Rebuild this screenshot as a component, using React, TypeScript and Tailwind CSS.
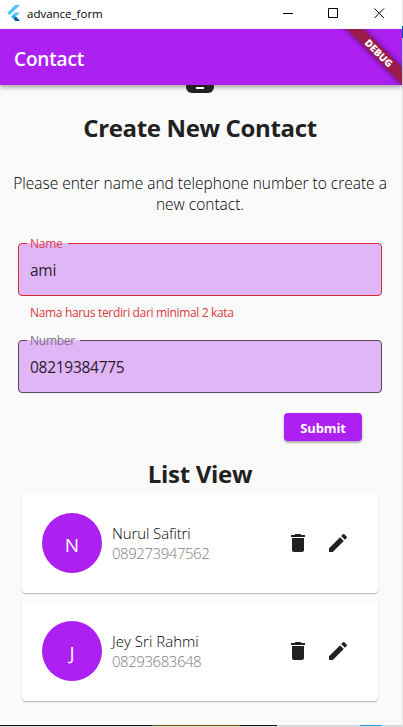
import React from "react";

type FieldProps = {
  label: string;
  value: string;
  invalid?: boolean;
  labelClass: string;
};

function Field({ label, value, invalid, labelClass }: FieldProps) {
  return (
    <div
      className={
        "relative mx-[18px] flex h-[53px] items-center rounded-[4px] border bg-[#e1b6f7] pl-[11px] font-normal " +
        (invalid ? "border-[#d62b35]" : "border-[#5b4a66]")
      }
    >
      <span
        className={
          "absolute -top-px left-2 flex h-px items-center whitespace-nowrap bg-[#e6c3f8] pl-[3px] text-[12px] leading-none tracking-[-0.25px] " +
          labelClass
        }
      >
        {label}
      </span>
      <span className="whitespace-nowrap text-[15.5px] leading-5 tracking-[-0.28px] text-[#2a2030]">{value}</span>
    </div>
  );
}

type ContactProps = { initial: string; name: string; phone: string; nameClass: string };

function ContactCard({ initial, name, phone, nameClass }: ContactProps) {
  return (
    <div className="mx-[22px] flex h-[100px] items-center rounded-[4px] bg-white pl-5 pr-7 shadow-[0_1px_1px_rgba(0,0,0,0.22),0_1px_2px_rgba(0,0,0,0.08)]">
      <div className="flex h-[60px] w-[60px] items-center justify-center rounded-full bg-[#ad20f2] pt-[4px] text-[19px] font-normal text-white">
        {initial}
      </div>
      <div className="ml-2.5 flex flex-1 flex-col whitespace-nowrap text-[15px] leading-5">
        <span className={"text-black " + nameClass}>{name}</span>
        <span className="tracking-[-0.45px] text-[#808080]">{phone}</span>
      </div>
      <div className="flex gap-4 text-[#212121]">
        <svg className="h-6 w-6" viewBox="0 0 24 24" fill="currentColor">
          <path d="M6 19c0 1.1.9 2 2 2h8c1.1 0 2-.9 2-2V7H6v12zM19 4h-3.5l-1-1h-5l-1 1H5v2h14V4z" />
        </svg>
        <svg className="h-6 w-6" viewBox="0 0 24 24" fill="currentColor">
          <path d="M3 17.25V21h3.75L17.81 9.94l-3.75-3.75L3 17.25zM20.71 7.04a1 1 0 0 0 0-1.41l-2.34-2.34a1 1 0 0 0-1.41 0l-1.83 1.83 3.75 3.75 1.83-1.83z" />
        </svg>
      </div>
    </div>
  );
}

function TitleBar() {
  return (
    <header className="flex h-[29px] items-center bg-white pl-[7px]">
      <svg className="mt-[-3px] h-4 w-[14px]" viewBox="0 0 14 16">
        <path d="M8.2 0H13L2.6 10.2.2 7.8z" fill="#54c5f8" />
        <path d="M8.2 7.4H13L8.8 11.6 6.5 9.3z" fill="#54c5f8" />
        <path d="M4.2 11.6 6.6 9.2l2.4 2.4-2.4 2.4z" fill="#29a6e5" />
        <path d="M6.6 14 9 11.6 13 16H8.4z" fill="#01579b" />
      </svg>
      <span className="ml-[6px] mt-[-2px] whitespace-nowrap text-[11.5px] font-normal leading-4 text-black">advance_form</span>
      <svg className="ml-auto mr-[16px] mt-[-2px] h-[11px] w-[104px]" viewBox="0 0 104 11" fill="none" stroke="#000" strokeWidth="1">
        <path d="M1 5.5h10" />
        <path d="M46.5 .5h9v9h-9z" />
        <path d="M92.5 .5l9.5 9.5M102 .5l-9.5 9.5" />
      </svg>
    </header>
  );
}

function AppBar() {
  return (
    <div className="relative z-10 flex h-14 items-center bg-[#ad20f2] pl-[14px] shadow-[0_2px_4px_rgba(0,0,0,0.28),0_4px_5px_rgba(0,0,0,0.08)]">
      <h1 className="mt-1 whitespace-nowrap text-[19px] font-semibold leading-6 tracking-[-0.15px] text-white">Contact</h1>
      <div className="absolute inset-y-0 right-0 w-20 overflow-hidden">
        <div className="absolute right-[-27px] top-[18px] flex h-3 w-[100px] rotate-45 items-center justify-center bg-[#991b4c] text-[10px] font-extrabold leading-none text-white shadow-[0_0_6px_rgba(0,0,0,0.5)]">
          DEBUG
        </div>
      </div>
      <div className="absolute left-[186px] top-14 flex h-2 w-7 justify-center rounded-b-[6px] bg-[#212121] pt-[2px]">
        <div className="h-0.5 w-2 bg-white" />
      </div>
    </div>
  );
}

export default function App() {
  return (
    <div className="flex h-[727px] w-[403px] flex-col overflow-hidden bg-[#fafafa] font-['Open_Sans','Noto_Sans',sans-serif] font-light">
      <div className="flex min-h-0 flex-1">
        <div className="flex w-[402px] shrink-0 flex-col">
          <TitleBar />
          <AppBar />
          <main className="flex w-[400px] flex-col">
            <h2 className="mt-[27px] whitespace-nowrap text-center text-[24px] font-bold leading-8 tracking-[-0.35px] text-[#212121]">
              Create New Contact
            </h2>
            <p className="mt-[29px] flex flex-col whitespace-nowrap text-center text-[15.5px] leading-[21px] text-black">
              <span>Please enter name and telephone number to create a</span>
              <span>new contact.</span>
            </p>
            <div className="mt-[28px]">
              <Field label="Name" value="ami" invalid labelClass="w-[41px] text-[#d8414b]" />
            </div>
            <p className="ml-[30px] mt-[9px] whitespace-nowrap text-[12px] font-normal leading-4 tracking-[-0.34px] text-[#d63a3a]">
              Nama harus terdiri dari minimal 2 kata
            </p>
            <div className="mt-[19px]">
              <Field label="Number" value="08219384775" labelClass="w-[53px] text-[#7d7084]" />
            </div>
            <button className="ml-[284px] mt-5 flex h-7 w-[78px] items-center justify-center rounded-[4px] bg-[#ad20f2] pt-[3px] text-[13px] font-bold tracking-[-0.1px] text-white shadow-[0_2px_2px_rgba(0,0,0,0.22),0_1px_3px_rgba(0,0,0,0.15)]">
              Submit
            </button>
            <h2 className="mt-[17px] text-center text-[24px] font-bold leading-8 tracking-[-0.3px] text-[#212121]">List View</h2>
            <section className="mt-[3px] flex flex-col gap-2">
              <ContactCard initial="N" name="Nurul Safitri" phone="089273947562" nameClass="tracking-[-0.1px]" />
              <ContactCard initial="J" name="Jey Sri Rahmi" phone="08293683648" nameClass="tracking-[0.03px]" />
            </section>
          </main>
        </div>
        <div className="flex w-px flex-col bg-[#e8e8e8]">
          <div className="mt-[26px] h-3 bg-[#0860b0]" />
        </div>
      </div>
      <footer className="flex h-[2px] flex-col">
        <div className="flex h-px">
          <div className="w-[152px] bg-[#111216]" />
          <div className="w-[88px] bg-[#6d5200]" />
          <div className="w-[37px] bg-[#111216]" />
          <div className="w-[83px] bg-[#d5d5d5]" />
          <div className="w-[22px] bg-[#1b98d5]" />
          <div className="flex-1 bg-[#d5d5d5]" />
        </div>
        <div className="h-px bg-[#e0e0e0]" />
      </footer>
    </div>
  );
}
